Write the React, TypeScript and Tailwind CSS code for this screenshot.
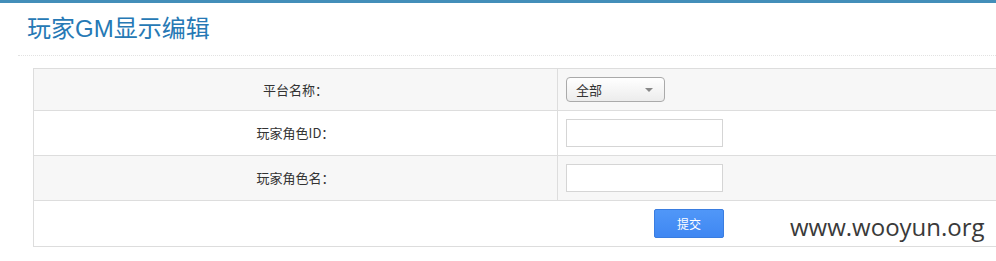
import React from "react";

const cjk = "font-['Noto_Sans_CJK_SC','Noto_Sans',sans-serif]";

const App = () => {
  return (
    <div className="relative w-[996px] h-[261px] overflow-hidden bg-white">
      <div className="h-[3px] bg-[#438eb9]" />

      <div className="pl-[18px]">
        {/* Header */}
        <div className="h-[53px] border-b border-dotted border-[#e2e2e2] flex items-center pl-[9px]">
          <h1 className="text-[24px] leading-none text-[#2679b5] font-normal pb-[1px] font-['Liberation_Sans','Noto_Sans_CJK_SC',sans-serif]">
            玩家GM显示编辑
          </h1>
        </div>

        {/* Form table */}
        <table
          className={`mt-[12px] ml-[15px] w-[1312px] border-collapse border border-[#ddd] text-[13px] text-[#333] ${cjk}`}
        >
          <tbody>
            <tr className="bg-[#f7f7f7]">
              <td className="w-[524px] h-[42px] border border-[#ddd] text-center">平台名称：</td>
              <td className="border border-[#ddd] pl-[8px]">
                <div className="w-[99px] h-[25px] rounded-[4px] border border-[#aaa] bg-gradient-to-b from-white to-[#ececec] flex items-center justify-between pl-[9px] pr-[11px]">
                  <span className="text-[13px] text-[#333]">全部</span>
                  <span className="w-0 h-0 border-l-[4px] border-r-[4px] border-t-[4px] border-l-transparent border-r-transparent border-t-[#888]" />
                </div>
              </td>
            </tr>
            <tr className="bg-white">
              <td className="h-[45px] border border-[#ddd] text-center">玩家角色ID：</td>
              <td className="border border-[#ddd] pl-[8px]">
                <input
                  type="text"
                  className="block w-[157px] h-[28px] border border-[#d5d5d5] bg-white outline-none"
                />
              </td>
            </tr>
            <tr className="bg-[#f7f7f7]">
              <td className="h-[45px] border border-[#ddd] text-center">玩家角色名：</td>
              <td className="border border-[#ddd] pl-[8px]">
                <input
                  type="text"
                  className="block w-[157px] h-[28px] border border-[#d5d5d5] bg-white outline-none"
                />
              </td>
            </tr>
            <tr className="bg-white">
              <td colSpan={2} className="h-[46px] border border-[#ddd] text-center">
                <button
                  type="button"
                  className="w-[70px] h-[29px] rounded-[2px] border border-[#3a7de0] bg-gradient-to-b from-[#5097f8] to-[#3f87f2] text-white text-[12px]"
                >
                  提交
                </button>
              </td>
            </tr>
          </tbody>
        </table>
      </div>

      {/* Watermark */}
      <div className="absolute left-[790px] top-[215px] text-[24px] leading-none text-[#3a3a3a] font-['Open_Sans',sans-serif]">
        www.wooyun.org
      </div>
    </div>
  );
};

export default App;
